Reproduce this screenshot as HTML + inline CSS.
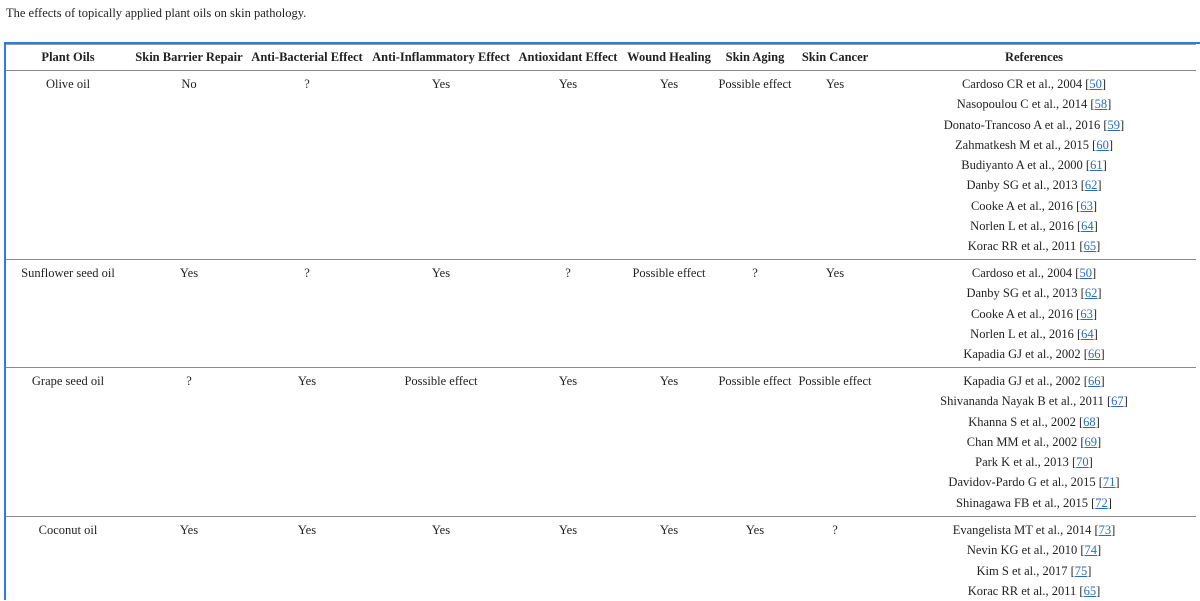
<!DOCTYPE html>
<html><head><meta charset="utf-8"><style>
body{margin:0;width:1200px;height:600px;overflow:hidden;background:#fff;font-family:"Liberation Serif","DejaVu Serif",serif;font-size:12.5px;color:#222;position:relative}
.t{position:absolute;white-space:nowrap;transform:translateX(-50%);line-height:20.3px}
.h{font-weight:bold;color:#222}
.line{position:absolute;left:6px;width:1190px;height:1px;background:#8a8a8a}
a{color:#2a6ebb;text-decoration:underline}
</style></head><body>
<div style="position:absolute;left:6px;top:3px;font-size:12.5px;line-height:20px">The effects of topically applied plant oils on skin pathology.</div>
<div style="position:absolute;left:4px;top:42px;width:1196px;height:2px;background:#2b7de0"></div>
<div style="position:absolute;left:4px;top:42px;width:2px;height:558px;background:#2b7de0"></div>
<div class="line" style="top:44px;background:#999"></div>
<div class="line" style="top:70px"></div>
<div class="line" style="top:259px"></div>
<div class="line" style="top:367px"></div>
<div class="line" style="top:516px"></div>

<div class="t h" style="left:68px;top:47px">Plant Oils</div>
<div class="t h" style="left:189px;top:47px">Skin Barrier Repair</div>
<div class="t h" style="left:307px;top:47px">Anti-Bacterial Effect</div>
<div class="t h" style="left:441px;top:47px">Anti-Inflammatory Effect</div>
<div class="t h" style="left:568px;top:47px">Antioxidant Effect</div>
<div class="t h" style="left:669px;top:47px">Wound Healing</div>
<div class="t h" style="left:755px;top:47px">Skin Aging</div>
<div class="t h" style="left:835px;top:47px">Skin Cancer</div>
<div class="t h" style="left:1034px;top:47px">References</div>

<div class="t" style="left:68px;top:74px">Olive oil</div>
<div class="t" style="left:189px;top:74px">No</div>
<div class="t" style="left:307px;top:74px">?</div>
<div class="t" style="left:441px;top:74px">Yes</div>
<div class="t" style="left:568px;top:74px">Yes</div>
<div class="t" style="left:669px;top:74px">Yes</div>
<div class="t" style="left:755px;top:74px">Possible effect</div>
<div class="t" style="left:835px;top:74px">Yes</div>
<div class="t" style="left:1034px;top:74px;text-align:center">Cardoso CR et al., 2004 [<a>50</a>]<br>Nasopoulou C et al., 2014 [<a>58</a>]<br>Donato-Trancoso A et al., 2016 [<a>59</a>]<br>Zahmatkesh M et al., 2015 [<a>60</a>]<br>Budiyanto A et al., 2000 [<a>61</a>]<br>Danby SG et al., 2013 [<a>62</a>]<br>Cooke A et al., 2016 [<a>63</a>]<br>Norlen L et al., 2016 [<a>64</a>]<br>Korac RR et al., 2011 [<a>65</a>]</div>

<div class="t" style="left:68px;top:263px">Sunflower seed oil</div>
<div class="t" style="left:189px;top:263px">Yes</div>
<div class="t" style="left:307px;top:263px">?</div>
<div class="t" style="left:441px;top:263px">Yes</div>
<div class="t" style="left:568px;top:263px">?</div>
<div class="t" style="left:669px;top:263px">Possible effect</div>
<div class="t" style="left:755px;top:263px">?</div>
<div class="t" style="left:835px;top:263px">Yes</div>
<div class="t" style="left:1034px;top:263px;text-align:center">Cardoso et al., 2004 [<a>50</a>]<br>Danby SG et al., 2013 [<a>62</a>]<br>Cooke A et al., 2016 [<a>63</a>]<br>Norlen L et al., 2016 [<a>64</a>]<br>Kapadia GJ et al., 2002 [<a>66</a>]</div>

<div class="t" style="left:68px;top:371px">Grape seed oil</div>
<div class="t" style="left:189px;top:371px">?</div>
<div class="t" style="left:307px;top:371px">Yes</div>
<div class="t" style="left:441px;top:371px">Possible effect</div>
<div class="t" style="left:568px;top:371px">Yes</div>
<div class="t" style="left:669px;top:371px">Yes</div>
<div class="t" style="left:755px;top:371px">Possible effect</div>
<div class="t" style="left:835px;top:371px">Possible effect</div>
<div class="t" style="left:1034px;top:371px;text-align:center">Kapadia GJ et al., 2002 [<a>66</a>]<br>Shivananda Nayak B et al., 2011 [<a>67</a>]<br>Khanna S et al., 2002 [<a>68</a>]<br>Chan MM et al., 2002 [<a>69</a>]<br>Park K et al., 2013 [<a>70</a>]<br>Davidov-Pardo G et al., 2015 [<a>71</a>]<br>Shinagawa FB et al., 2015 [<a>72</a>]</div>

<div class="t" style="left:68px;top:520px">Coconut oil</div>
<div class="t" style="left:189px;top:520px">Yes</div>
<div class="t" style="left:307px;top:520px">Yes</div>
<div class="t" style="left:441px;top:520px">Yes</div>
<div class="t" style="left:568px;top:520px">Yes</div>
<div class="t" style="left:669px;top:520px">Yes</div>
<div class="t" style="left:755px;top:520px">Yes</div>
<div class="t" style="left:835px;top:520px">?</div>
<div class="t" style="left:1034px;top:520px;text-align:center">Evangelista MT et al., 2014 [<a>73</a>]<br>Nevin KG et al., 2010 [<a>74</a>]<br>Kim S et al., 2017 [<a>75</a>]<br>Korac RR et al., 2011 [<a>65</a>]</div>
</body></html>
